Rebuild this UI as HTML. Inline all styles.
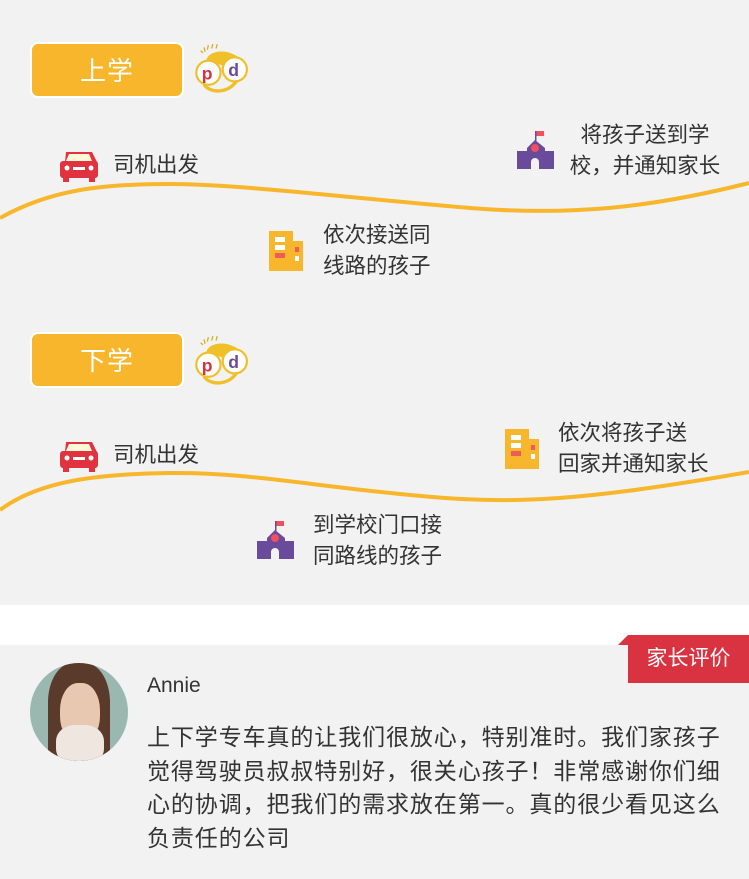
<!DOCTYPE html>
<html><head><meta charset="utf-8"><style>
body{margin:0;width:749px;height:879px;background:#f2f2f2;font-family:"Liberation Sans","Noto Sans CJK SC",sans-serif;position:relative;overflow:hidden;color:#333}
.a{position:absolute}
.btn{position:absolute;left:30px;width:154px;height:56px;border:2px solid #fff;border-radius:8px;background:#f8b62c;color:#fff;font-size:26px;line-height:54px;text-align:center;box-sizing:border-box;letter-spacing:1px}
.t{position:absolute;font-size:21.5px;line-height:31px;color:#333}
</style></head><body>
<div class="btn" style="top:42px">上学</div>
<div class="btn" style="top:332px">下学</div>

<svg class="a" style="left:0;top:0" width="749" height="605">
<defs>
<g id="logo">
<path d="M14 2l-1 4M18 1l-1 4M22 1l-1 4M10 4l1 4M7 7l2 2" stroke="#d4b020" stroke-width="1.2"/>
<path d="M12 16c2-9 16-10 24-6 8 3 12 10 10 16" fill="#f0c02a"/>
<circle cx="14" cy="27" r="11" fill="#fff" stroke="#f0c02a" stroke-width="2"/>
<circle cx="38" cy="24" r="11" fill="#fff" stroke="#f0c02a" stroke-width="2"/>
<path d="M10 38c6 8 22 8 30 -4" fill="none" stroke="#f0c02a" stroke-width="3"/>
<text x="8" y="33" font-size="16" font-weight="bold" fill="#d93240" font-family="Liberation Sans">p</text>
<text x="32" y="30" font-size="16" font-weight="bold" fill="#6a4a9a" font-family="Liberation Sans">d</text>
</g>
<g id="car">
<path d="M6 2h26l5 10h-32z" fill="#e0323f"/>
<path d="M9 4h20l3 7h-26z" fill="#fff8d6"/>
<rect x="0" y="11" width="38" height="17" rx="3" fill="#e0323f"/>
<rect x="3" y="26" width="6" height="6" fill="#e0323f"/><rect x="29" y="26" width="6" height="6" fill="#e0323f"/>
<circle cx="7" cy="18" r="2.5" fill="#fff"/><circle cx="31" cy="18" r="2.5" fill="#fff"/>
<rect x="13" y="17" width="12" height="3" fill="#fff"/>
</g>
<g id="school">
<rect x="19" y="0" width="8" height="5" fill="#f05060"/><rect x="18" y="0" width="1.5" height="10" fill="#6a4a9a"/>
<path d="M18 9l-8 8v20h18v-20z" fill="#6a4a9a"/>
<rect x="0" y="20" width="37" height="18" fill="#6a4a9a"/>
<circle cx="18" cy="17" r="4" fill="#f05060"/>
<path d="M14 38v-7a4 4 0 0 1 8 0v7z" fill="#f2f2f2"/>
</g>
<g id="bld">
<rect x="0" y="0" width="24" height="40" fill="#f8b62c"/>
<rect x="24" y="10" width="10" height="30" fill="#f8b62c"/>
<rect x="6" y="6" width="10" height="5" fill="#fff"/><rect x="6" y="14" width="10" height="5" fill="#fff"/>
<rect x="6" y="22" width="10" height="5" fill="#f05a5a"/>
<rect x="26" y="16" width="4" height="5" fill="#f05a5a"/><rect x="26" y="25" width="4" height="5" fill="#fff"/>
</g>
</defs>
<use href="#logo" transform="translate(193,43) scale(1.1)"/>
<use href="#logo" transform="translate(193,335) scale(1.1)"/>
<path d="M0 218C50 190 100 184 170 184S370 200 470 208S650 208 749 183" fill="none" stroke="#f8b62c" stroke-width="4"/>
<path d="M0 510C40 480 100 474 170 473S300 484 400 494S560 505 749 472" fill="none" stroke="#f8b62c" stroke-width="4"/>
<use href="#car" x="60" y="150"/>
<use href="#car" x="60" y="440"/>
<use href="#school" x="517" y="131"/>
<use href="#school" x="257" y="521"/>
<use href="#bld" x="269" y="231"/>
<use href="#bld" x="505" y="429"/>
</svg>

<div class="t" style="left:113px;top:150px">司机出发</div>
<div class="t" style="left:560px;top:120px;text-align:center;width:170px">将孩子送到学<br>校，并通知家长</div>
<div class="t" style="left:323px;top:220px">依次接送同<br>线路的孩子</div>
<div class="t" style="left:113px;top:440px">司机出发</div>
<div class="t" style="left:558px;top:418px">依次将孩子送<br>回家并通知家长</div>
<div class="t" style="left:313px;top:510px">到学校门口接<br>同路线的孩子</div>

<div class="a" style="left:0;top:605px;width:749px;height:40px;background:#fff"></div>
<div class="a" style="left:618px;top:635px;width:0;height:0;border-left:10px solid transparent;border-bottom:10px solid #d93240"></div>
<div class="a" style="left:628px;top:635px;width:121px;height:48px;background:#d93240;color:#fff;font-size:21px;line-height:48px;text-align:center">家长评价</div>

<div class="a" style="left:30px;top:663px;width:98px;height:98px;border-radius:50%;overflow:hidden;background:#9bb8b0">
<div class="a" style="left:18px;top:0;width:62px;height:98px;background:#5a3a2a;border-radius:40% 40% 10% 10%"></div>
<div class="a" style="left:30px;top:20px;width:40px;height:60px;background:#e8c8b0;border-radius:45%"></div>
<div class="a" style="left:26px;top:62px;width:48px;height:40px;background:#f0e6e0;border-radius:40%"></div>
</div>
<div class="a" style="left:147px;top:674px;font-size:21px;color:#333">Annie</div>
<div class="a" style="left:147px;top:721px;width:590px;font-size:23px;letter-spacing:0.9px;line-height:33.5px;color:#333">上下学专车真的让我们很放心，特别准时。我们家孩子觉得驾驶员叔叔特别好，很关心孩子！非常感谢你们细心的协调，把我们的需求放在第一。真的很少看见这么负责任的公司</div>
</body></html>
